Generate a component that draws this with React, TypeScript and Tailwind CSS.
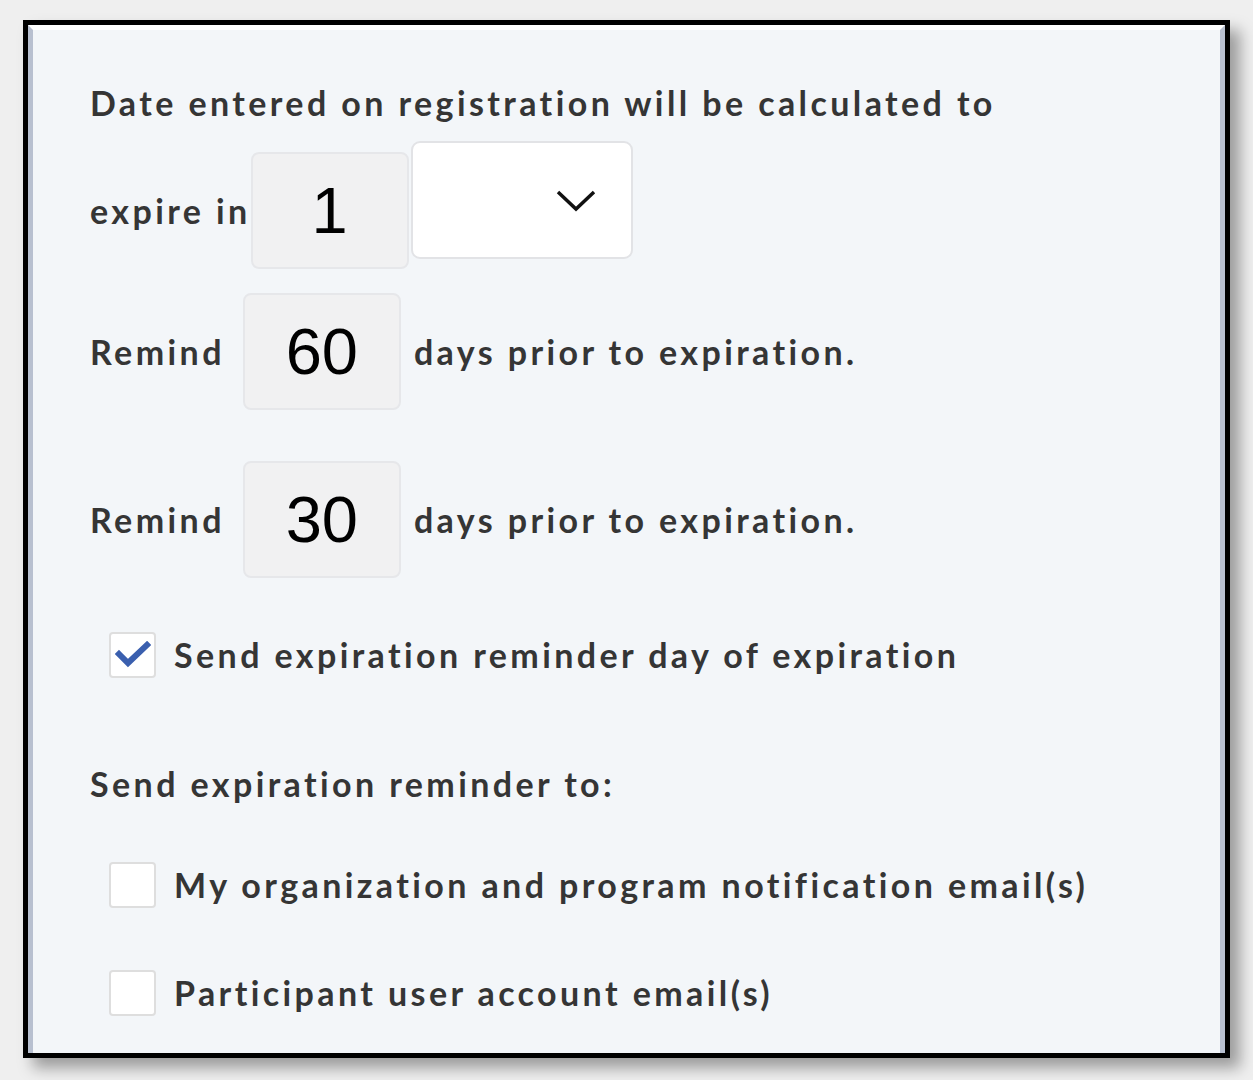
import React from "react";

const labelFont = "font-['Lato','Liberation_Sans',sans-serif] font-bold text-[34px] text-[#353535] tracking-[3.4px]";

function NumBox({ value, className = "" }: { value: string; className?: string }) {
  return (
    <div
      className={`w-[158px] h-[117px] shrink-0 rounded-[8px] border-2 border-[#e6e7ea] bg-[#f1f1f2] flex items-center justify-center font-['Liberation_Sans',Arial,sans-serif] text-[65px] text-black ${className}`}
    >
      {value}
    </div>
  );
}

function Check({ checked = false }: { checked?: boolean }) {
  return (
    <div className="w-[47px] h-[46px] shrink-0 rounded-[4px] border-2 border-[#dedede] bg-white flex items-center justify-center">
      {checked && (
        <svg width="36" height="28" viewBox="0 0 36 28">
          <path d="M4 13 L13 22 L32 4" fill="none" stroke="#3a5fae" strokeWidth="6" strokeLinecap="square" />
        </svg>
      )}
    </div>
  );
}

export default function App() {
  return (
    <div className="w-[1253px] h-[1080px] bg-[#efefef] pt-[20px] pl-[23px]">
      <div className="w-[1207px] h-[1038px] border-[5px] border-black shadow-[10px_10px_14px_rgba(0,0,0,0.35)]">
        <div className="w-full h-full border-t-[5px] border-t-white border-l-[5px] border-l-[#b8c0d0] border-r-[5px] border-r-[#b8c0d0] bg-[#f3f6f9] pl-[57px]">
          {/* Header line */}
          <p className={`${labelFont} mt-[51px] leading-[44px] whitespace-nowrap`}>
            Date entered on registration will be calculated to
          </p>

          {/* expire in */}
          <div className="flex items-start mt-[16px]">
            <div className={`${labelFont} h-[117px] mt-[11px] flex items-center`}>expire in</div>
            <NumBox value="1" className="mt-[11px]" />
            <div className="ml-[2px] w-[222px] h-[118px] shrink-0 rounded-[9px] border-2 border-[#e2e3e6] bg-white flex items-center justify-end pr-[34px]">
              <svg width="42" height="26" viewBox="0 0 42 26">
                <path d="M3 5 L21 22 L39 5" fill="none" stroke="#111" strokeWidth="3.5" />
              </svg>
            </div>
          </div>

          {/* Remind 60 */}
          <div className="flex items-center mt-[24px]">
            <div className={labelFont}>Remind</div>
            <NumBox value="60" className="ml-[18px]" />
            <div className={`${labelFont} ml-[13px] whitespace-nowrap`}>days prior to expiration.</div>
          </div>

          {/* Remind 30 */}
          <div className="flex items-center mt-[51px]">
            <div className={labelFont}>Remind</div>
            <NumBox value="30" className="ml-[18px]" />
            <div className={`${labelFont} ml-[13px] whitespace-nowrap`}>days prior to expiration.</div>
          </div>

          <div className="flex items-center mt-[51px] ml-[19px] gap-[18px]">
            <Check checked />
            <div className={`${labelFont} whitespace-nowrap`}>Send expiration reminder day of expiration</div>
          </div>

          <p className={`${labelFont} mt-[82px] leading-[44px]`}>Send expiration reminder to:</p>

          <div className="flex items-center mt-[53px] ml-[19px] gap-[18px]">
            <Check />
            <div className={`${labelFont} whitespace-nowrap`}>My organization and program notification email(s)</div>
          </div>

          <div className="flex items-center mt-[57px] ml-[19px] gap-[18px]">
            <Check />
            <div className={`${labelFont} whitespace-nowrap`}>Participant user account email(s)</div>
          </div>
        </div>
      </div>
    </div>
  );
}
